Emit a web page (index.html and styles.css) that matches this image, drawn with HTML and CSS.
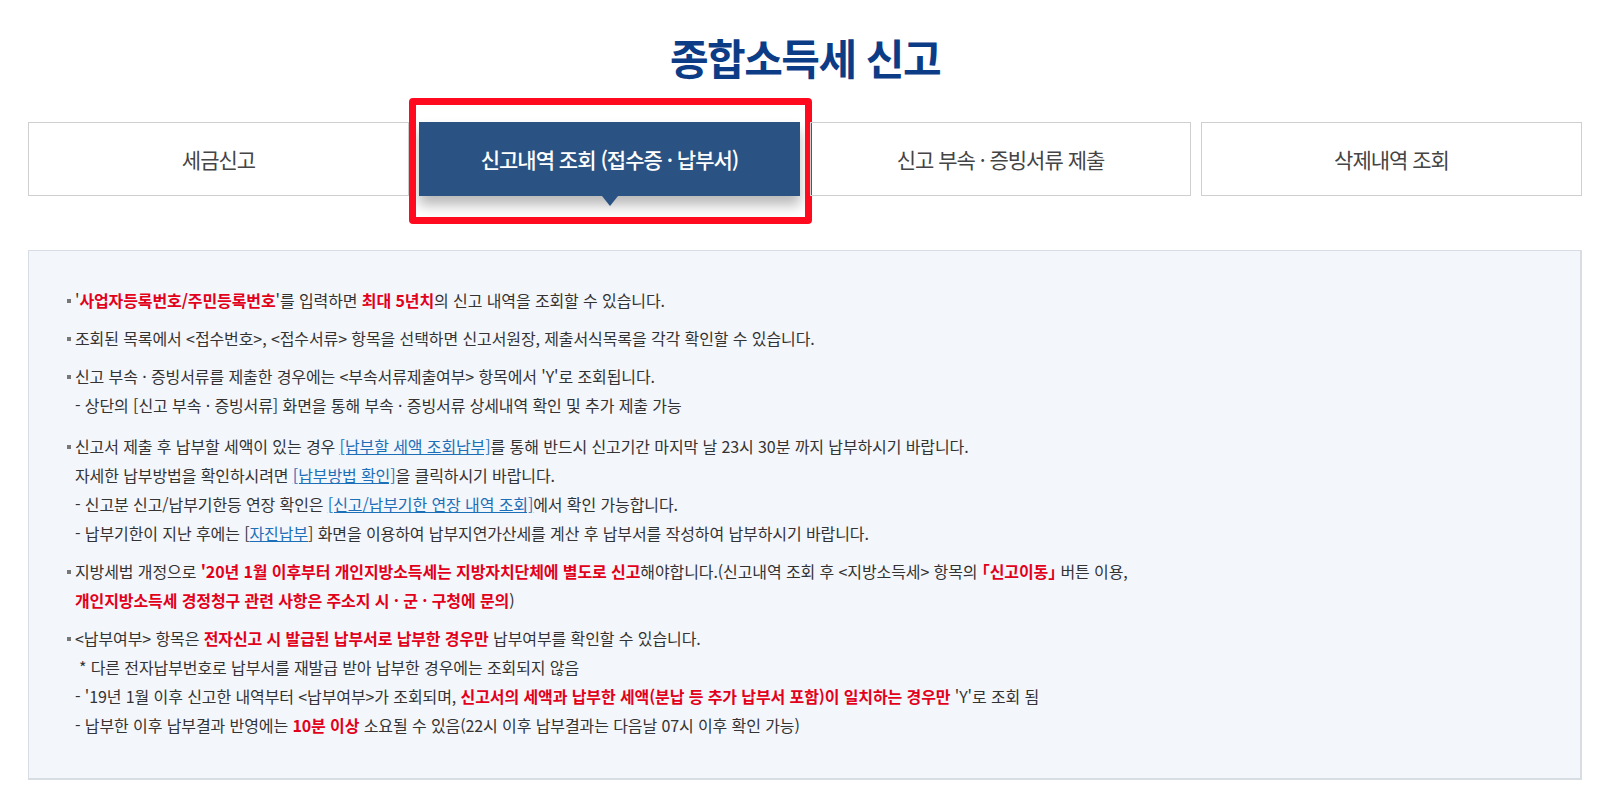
FILE: index.html
```html
<!DOCTYPE html>
<html lang="ko">
<head>
  <meta charset="UTF-8">
  <meta name="viewport" content="width=device-width, initial-scale=1">
  <title>종합소득세 신고</title>
  <link rel="stylesheet" href="styles.css">
</head>
<body>
  <div class="container">
    <h1>종합소득세 신고</h1>

    <ul class="tabs">
      <li class="tab">세금신고</li>
      <li class="tab active">
        신고내역 조회 (접수증 · 납부서)
        <span class="mark"></span>
      </li>
      <li class="tab">신고 부속 · 증빙서류 제출</li>
      <li class="tab">삭제내역 조회</li>
    </ul>

    <div class="notice">
      <ul>
        <li>'<b class="red">사업자등록번호/주민등록번호</b>'를 입력하면 <b class="red">최대 5년치</b>의 신고 내역을 조회할 수 있습니다.</li>
        <li>조회된 목록에서 &lt;접수번호&gt;, &lt;접수서류&gt; 항목을 선택하면 신고서원장, 제출서식목록을 각각 확인할 수 있습니다.</li>
        <li>신고 부속 · 증빙서류를 제출한 경우에는 &lt;부속서류제출여부&gt; 항목에서 'Y'로 조회됩니다.<br>
          - 상단의 [신고 부속 · 증빙서류] 화면을 통해 부속 · 증빙서류 상세내역 확인 및 추가 제출 가능</li>
        <li class="wide">신고서 제출 후 납부할 세액이 있는 경우 <a href="#">[납부할 세액 조회납부]</a>를 통해 반드시 신고기간 마지막 날 23시 30분 까지 납부하시기 바랍니다.<br>
          자세한 납부방법을 확인하시려면 <a href="#">[납부방법 확인]</a>을 클릭하시기 바랍니다.<br>
          - 신고분 신고/납부기한등 연장 확인은 <a href="#">[신고/납부기한 연장 내역 조회]</a>에서 확인 가능합니다.<br>
          - 납부기한이 지난 후에는 [<a href="#">자진납부</a>] 화면을 이용하여 납부지연가산세를 계산 후 납부서를 작성하여 납부하시기 바랍니다.</li>
        <li>지방세법 개정으로 <b class="red">'20년 1월 이후부터 개인지방소득세는 지방자치단체에 별도로 신고</b>해야합니다.(신고내역 조회 후 &lt;지방소득세&gt; 항목의 <b class="red">｢신고이동｣</b> 버튼 이용,<br>
          <b class="red">개인지방소득세 경정청구 관련 사항은 주소지 시 · 군 · 구청에 문의</b>)</li>
        <li>&lt;납부여부&gt; 항목은 <b class="red">전자신고 시 발급된 납부서로 납부한 경우만</b> 납부여부를 확인할 수 있습니다.<br>
          <span class="star">* 다른 전자납부번호로 납부서를 재발급 받아 납부한 경우에는 조회되지 않음</span><br>
          - '19년 1월 이후 신고한 내역부터 &lt;납부여부&gt;가 조회되며, <b class="red">신고서의 세액과 납부한 세액(분납 등 추가 납부서 포함)이 일치하는 경우만</b> 'Y'로 조회 됨<br>
          - 납부한 이후 납부결과 반영에는 <b class="red">10분 이상</b> 소요될 수 있음(22시 이후 납부결과는 다음날 07시 이후 확인 가능)</li>
      </ul>
    </div>
  </div>
</body>
</html>
```

FILE: styles.css
```css
body {
  margin: 0;
  background: #fff;
  color: #333;
  font-family: "Noto Sans CJK KR", "Noto Sans", sans-serif;
}
.container {
  width: 1554px;
  margin: 0 auto;
  padding-top: 33px;
}
h1 {
  margin: 0 0 41px;
  text-align: center;
  font-size: 42px;
  line-height: 48px;
  font-weight: 700;
  letter-spacing: -1.5px;
  color: #0d3c87;
}
.tabs {
  list-style: none;
  margin: 0;
  padding: 0;
  display: grid;
  grid-template-columns: repeat(4, 1fr);
  gap: 10px;
}
.tab {
  position: relative;
  height: 72px;
  border: 1px solid #cfcfcf;
  display: flex;
  align-items: center;
  justify-content: center;
  font-size: 21px;
  letter-spacing: -1px;
  color: #444;
}
.tab.active {
  background: #2a5384;
  border-color: #2a5384;
  color: #fff;
  font-weight: 500;
  box-shadow: 0 9px 12px rgba(0, 0, 0, 0.28);
}
.tab.active::after {
  content: "";
  position: absolute;
  left: 50%;
  bottom: -11px;
  margin-left: -8px;
  border-top: 10px solid #2a5384;
  border-left: 8px solid transparent;
  border-right: 8px solid transparent;
}
/* red highlight frame drawn over the active tab */
.mark {
  position: absolute;
  left: -11px;
  top: -25px;
  right: -13px;
  bottom: -29px;
  border: 7px solid #ff0a1e;
  border-radius: 4px;
  pointer-events: none;
}
.notice {
  margin-top: 54px;
  background: #f3f6fb;
  border: 1px solid #d8dde3;
  border-right-width: 2px;
  border-bottom-width: 2px;
  padding: 35px 40px 38px 46px;
}
.notice ul {
  list-style: none;
  margin: 0;
  padding: 0;
}
.notice li {
  position: relative;
  margin-top: 9px;
  font-size: 16px;
  line-height: 29px;
  letter-spacing: -0.1px;
}
.notice li:first-child {
  margin-top: 0;
}
.notice li.wide {
  margin-top: 12px;
}
.notice li::before {
  content: "";
  position: absolute;
  left: -8px;
  top: 13px;
  width: 4px;
  height: 4px;
  background: #777;
}
.red {
  color: #e2001a;
  font-weight: 700;
}
.notice a {
  color: #1d6fb8;
  text-decoration: underline;
}
.star {
  padding-left: 4px;
}
```
